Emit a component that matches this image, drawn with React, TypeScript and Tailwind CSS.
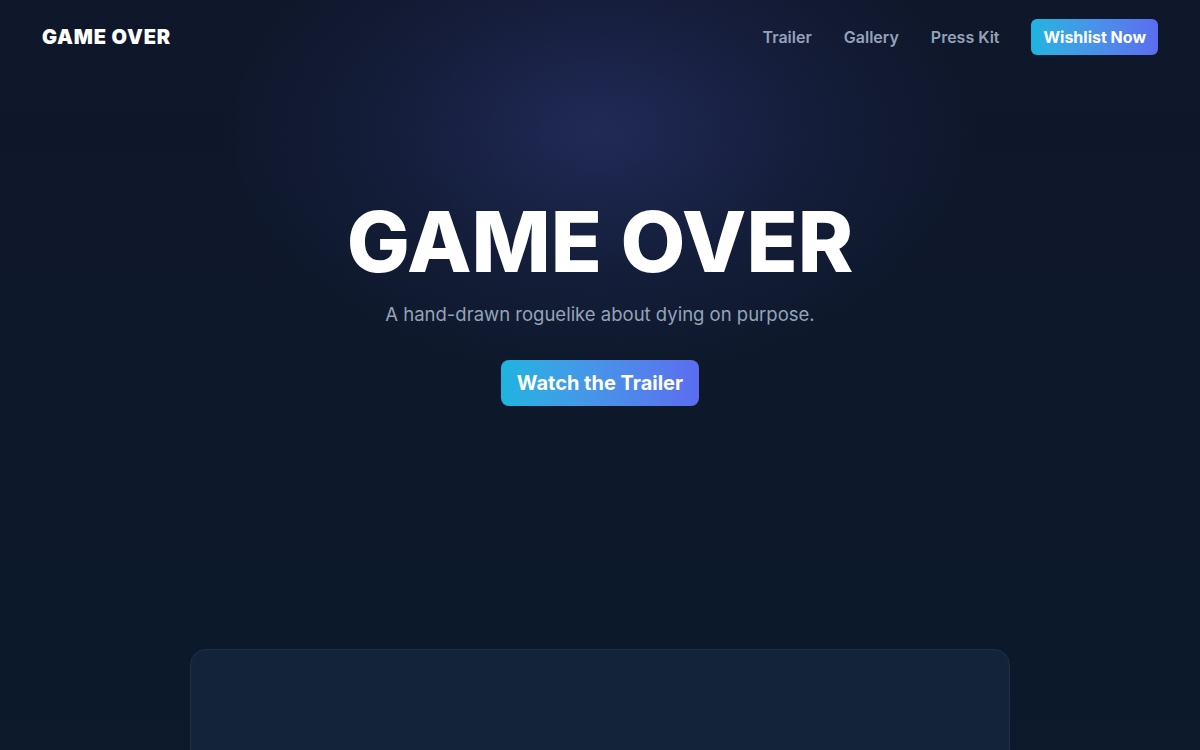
import React from "react";

const navLinks = ["Trailer", "Gallery", "Press Kit"];

export default function App() {
  return (
    <div
      className="relative min-h-[750px] w-full overflow-hidden bg-gradient-to-b from-[#0f172a] to-[#0b1a2b] text-white"
      style={{ fontFamily: "Inter, 'Noto Sans', sans-serif" }}
    >
      {/* soft indigo glow behind the hero */}
      <div className="pointer-events-none absolute left-1/2 top-[-120px] h-[500px] w-[760px] -translate-x-1/2 rounded-full bg-[radial-gradient(ellipse_at_center,rgba(79,90,200,0.28)_0%,rgba(60,70,170,0.12)_40%,transparent_70%)]" />

      <header className="relative flex h-[73px] items-center justify-between px-[42px]">
        <div className="text-[20px] font-black tracking-[0.04em]">GAME OVER</div>
        <nav className="flex items-center gap-8">
          {navLinks.map((l) => (
            <a key={l} href="#" className="text-[16px] font-semibold text-[#94a3b8]">
              {l}
            </a>
          ))}
          <a
            href="#"
            className="rounded-md bg-gradient-to-r from-[#1cb4e0] to-[#5b6cf0] px-3 py-[6px] text-[16px] font-bold text-white"
          >
            Wishlist Now
          </a>
        </nav>
      </header>

      <section className="relative flex flex-col items-center pt-[127px] text-center">
        <h1 className="text-[84px] font-extrabold leading-none tracking-[0]">GAME OVER</h1>
        <p className="mt-[17px] text-[18.5px] text-[#94a3b8]">
          A hand-drawn roguelike about dying on purpose.
        </p>
        <a
          href="#"
          className="mt-[31px] rounded-lg bg-gradient-to-r from-[#1cb4e0] to-[#5b6cf0] px-4 py-[8px] text-[20px] font-bold text-white"
        >
          Watch the Trailer
        </a>
      </section>

      <div className="relative mx-auto mt-[243px] h-[200px] w-[820px] rounded-2xl border border-[#1f2f47] bg-[#13233a]" />
    </div>
  );
}
